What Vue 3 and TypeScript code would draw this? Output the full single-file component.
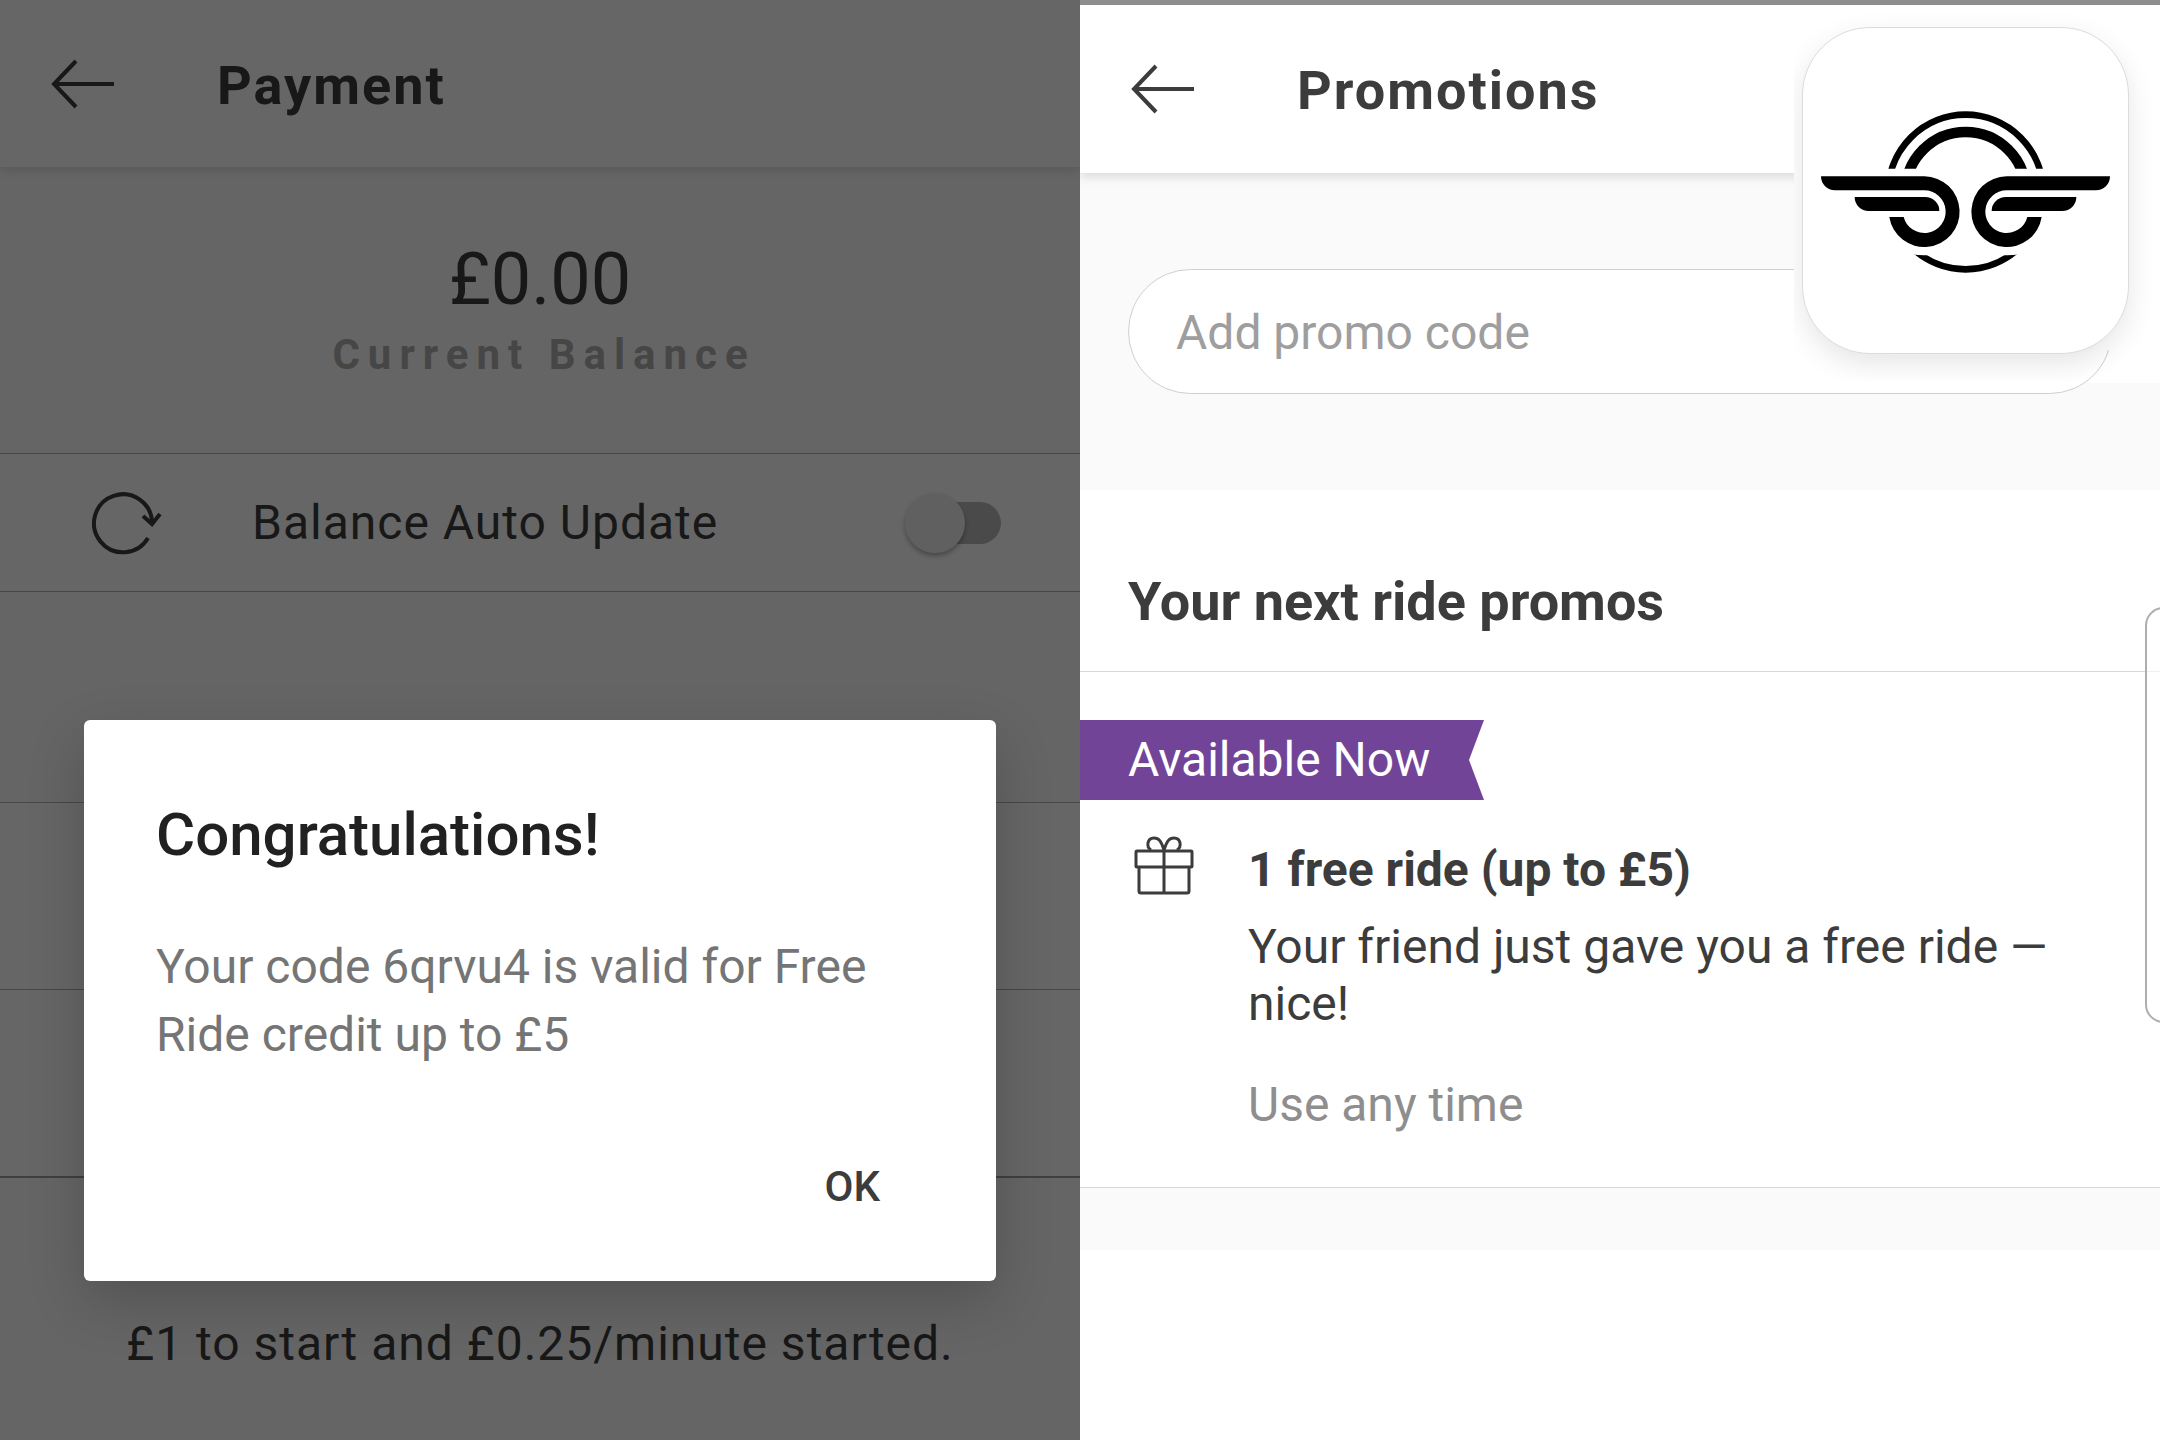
<script setup lang="ts">
import { ref } from 'vue'

const autoUpdate = ref(false)
const promoCode = ref('')
</script>

<template>
  <main class="screens">
    <section class="screen payment">
      <header class="bar">
        <button class="back" type="button" aria-label="Back">
          <svg viewBox="0 0 64 50" width="64" height="50"><path d="M25 2 3 25 25 48M3 25H63" /></svg>
        </button>
        <h1>Payment</h1>
      </header>
      <div class="balance">
        <p class="amount">£0.00</p>
        <p class="caption">Current Balance</p>
      </div>
      <label class="auto">
        <svg class="refresh" viewBox="0 0 72 64" width="72" height="64">
          <path d="M56 47A29 29 0 1 1 60 33M51 25 60 33 68 23" />
        </svg>
        <span>Balance Auto Update</span>
        <input v-model="autoUpdate" class="toggle" type="checkbox" />
      </label>
      <div class="spacer"></div>
      <div class="row"></div>
      <div class="row last"></div>
      <p class="pricing">£1 to start and £0.25/minute started.</p>

      <div class="scrim">
        <div class="dialog" role="dialog" aria-labelledby="dialog-title">
          <h2 id="dialog-title">Congratulations!</h2>
          <p>Your code 6qrvu4 is valid for Free Ride credit up to £5</p>
          <button class="ok" type="button">OK</button>
        </div>
      </div>
    </section>

    <section class="screen promotions">
      <header class="bar">
        <button class="back" type="button" aria-label="Back">
          <svg viewBox="0 0 64 50" width="64" height="50"><path d="M25 2 3 25 25 48M3 25H63" /></svg>
        </button>
        <h1>Promotions</h1>
      </header>
      <div class="entry">
        <input v-model="promoCode" type="text" placeholder="Add promo code" aria-label="Promo code" />
      </div>
      <h2 class="heading">Your next ride promos</h2>
      <article class="promo">
        <div class="ribbon">Available Now</div>
        <div class="offer">
          <svg class="gift" viewBox="0 0 60 60" width="60" height="60">
            <rect x="2" y="16" width="56" height="16" rx="1" />
            <path d="M5 32V56Q5 58 7 58H53Q55 58 55 56V32M30 16V58" />
            <path d="M30 15C27 6 25 3 20 3 13 3 12 12 17 15M30 15C33 6 35 3 40 3 47 3 48 12 43 15" />
          </svg>
          <div class="details">
            <h3>1 free ride (up to £5)</h3>
            <p>Your friend just gave you a free ride — nice!</p>
            <p class="validity">Use any time</p>
          </div>
        </div>
      </article>
      <div class="band"></div>

      <div class="backdrop"></div>
      <div class="frame">
        <div class="app-icon">
          <svg viewBox="0 0 930 600" width="310" height="200" role="img" aria-label="Winged wheel logo">
            <defs>
              <clipPath id="upper"><rect width="930" height="236" /></clipPath>
              <clipPath id="lower"><path d="M300 492Q340 498 365 494H569Q594 498 634 492V600H300Z" /></clipPath>
              <g id="wing">
                <path d="M33 259H343A106 106 0 1 1 238 381H281A64 64 0 1 0 343 301H75A42 42 0 0 1 33 259Z" />
                <path d="M134 321H345A43 42 0 0 1 388 363H176A42 42 0 0 1 134 321Z" />
              </g>
            </defs>
            <g fill="none" stroke="#000">
              <circle cx="467" cy="306" r="232" stroke-width="20" clip-path="url(#upper)" />
              <circle cx="467" cy="306" r="180" stroke-width="32" clip-path="url(#upper)" />
              <circle cx="467" cy="306" r="232" stroke-width="20" clip-path="url(#lower)" />
            </g>
            <use href="#wing" />
            <use href="#wing" transform="translate(933 0) scale(-1 1)" />
          </svg>
        </div>
      </div>
      <div class="edge-handle"></div>
    </section>
  </main>
</template>

<style>
body {
  margin: 0;
  background: #fff;
}
</style>

<style scoped>
.screens {
  display: grid;
  grid-template-columns: 1fr 1fr;
  min-height: 100vh;
  font-family: Roboto, 'Liberation Sans', sans-serif;
  font-size: 48px;
  line-height: 57px;
  color: #3c3c3c;
}

h1,
h2,
h3,
p {
  margin: 0;
}

button {
  padding: 0;
  border: 0;
  background: none;
  font: inherit;
  color: inherit;
}

.screen {
  position: relative;
  overflow: hidden;
}

.bar {
  position: relative;
  display: flex;
  align-items: center;
  gap: 102px;
  height: 167px;
  padding-left: 51px;
  background: #fff;
  box-shadow: 0 4px 10px rgba(0, 0, 0, 0.13);
}

.bar h1 {
  font-size: 54px;
  line-height: 64px;
  letter-spacing: 2px;
  font-weight: 700;
  padding-top: 4px;
}

.back {
  height: 50px;
}

.back svg {
  display: block;
  fill: none;
  stroke: #3c3c3c;
  stroke-width: 4px;
}

/* Payment */
.payment {
  background: #fdfdfd;
}

.balance {
  height: 286px;
  box-sizing: border-box;
  padding-top: 71px;
  text-align: center;
}

.amount {
  font-size: 72px;
  line-height: 84px;
}

.caption {
  padding-left: 8px;
  font-size: 42px;
  line-height: 66px;
  font-weight: 700;
  letter-spacing: 8px;
  color: #afafaf;
}

.auto {
  display: flex;
  align-items: center;
  height: 137px;
  padding: 0 79px 0 92px;
  border-top: 1px solid #b2b2b2;
  border-bottom: 1px solid #b2b2b2;
  background: #fff;
  letter-spacing: 1px;
}

.auto span {
  flex: 1;
  padding-left: 88px;
}

.refresh {
  fill: none;
  stroke: #3c3c3c;
  stroke-width: 4px;
}

.toggle {
  appearance: none;
  position: relative;
  width: 84px;
  height: 42px;
  margin: 0;
  border-radius: 21px;
  background: #b9b9b9;
}

.toggle::before {
  content: '';
  position: absolute;
  top: -9px;
  left: -12px;
  width: 60px;
  height: 60px;
  border-radius: 50%;
  background: #f1f1f1;
  box-shadow: 0 3px 5px rgba(0, 0, 0, 0.3);
}

.toggle:checked::before {
  left: 36px;
}

.spacer {
  height: 210px;
}

.row {
  height: 186px;
  border-top: 1px solid #b2b2b2;
  background: #fff;
}

.row.last {
  border-bottom: 2px solid #9e9e9e;
}

.pricing {
  padding: 137px 0 66px;
  text-align: center;
  letter-spacing: 1px;
}

.scrim {
  position: absolute;
  inset: 0;
  padding: 720px 84px 0;
  background: rgba(0, 0, 0, 0.6);
}

.dialog {
  display: flex;
  flex-direction: column;
  padding: 79px 72px 54px;
  border-radius: 6px;
  background: #fff;
  box-shadow: 0 20px 56px rgba(0, 0, 0, 0.19);
}

.dialog h2 {
  font-size: 60px;
  line-height: 72px;
  font-weight: 500;
  color: #212121;
}

.dialog p {
  padding-top: 62px;
  line-height: 68px;
  color: #757575;
}

.ok {
  align-self: flex-end;
  margin: 78px 44px 0 0;
  font-size: 42px;
  line-height: 80px;
  font-weight: 500;
}

/* Promotions */
.promotions {
  background: #fff;
  border-top: 5px solid #8e8e8e;
}

.promotions .bar {
  height: 168px;
}

.entry {
  padding: 96px 48px;
  background: #fafafa;
}

.entry input {
  position: relative;
  z-index: 2;
  display: block;
  box-sizing: border-box;
  width: 100%;
  height: 125px;
  padding: 2px 47px 0;
  border: 1px solid #cfcfcf;
  border-radius: 63px;
  background: #fff;
  font: inherit;
  color: inherit;
  outline: none;
}

.entry input::placeholder {
  color: #9e9e9e;
  opacity: 1;
}

.heading {
  padding: 80px 48px 37px;
  border-bottom: 1px solid #d8d8d8;
  font-size: 54px;
  line-height: 64px;
  font-weight: 700;
}

.promo {
  padding: 48px 0 54px;
  border-bottom: 1px solid #d8d8d8;
}

.ribbon {
  width: 356px;
  padding-left: 48px;
  line-height: 80px;
  color: #fff;
  background: #724498;
  clip-path: polygon(0 0, 100% 0, calc(100% - 15px) 50%, 100% 100%, 0 100%);
}

.offer {
  display: flex;
  gap: 54px;
  padding: 35px 96px 0 54px;
}

.gift {
  flex: none;
  fill: none;
  stroke: #3c3c3c;
  stroke-width: 3px;
}

.details {
  padding-top: 6px;
}

.details h3 {
  font-size: 48px;
  line-height: 57px;
  font-weight: 700;
  padding-bottom: 20px;
}

.validity {
  padding-top: 44px;
  color: #8e8e8e;
}

.band {
  height: 62px;
  background: #fafafa;
}

.backdrop {
  position: absolute;
  top: 0;
  right: 0;
  width: 366px;
  height: 378px;
  background: #fff;
}

.frame {
  position: absolute;
  z-index: 3;
  top: 0;
  right: 0;
  padding: 22px 31px 26px 8px;
  overflow: hidden;
  background: linear-gradient(#fff, #fff) no-repeat 0 0 / 100% 345px;
}

.app-icon {
  padding: 62px 8px 63px 7px;
  border: 1px solid #dcdcdc;
  border-radius: 68px;
  background: #fff;
  box-shadow: 0 10px 28px rgba(0, 0, 0, 0.1);
}

.app-icon svg {
  display: block;
}

.edge-handle {
  position: absolute;
  top: 602px;
  right: -22px;
  width: 33px;
  height: 412px;
  border: 2px solid #adadad;
  border-radius: 20px;
  background: rgba(255, 255, 255, 0.6);
}
</style>
